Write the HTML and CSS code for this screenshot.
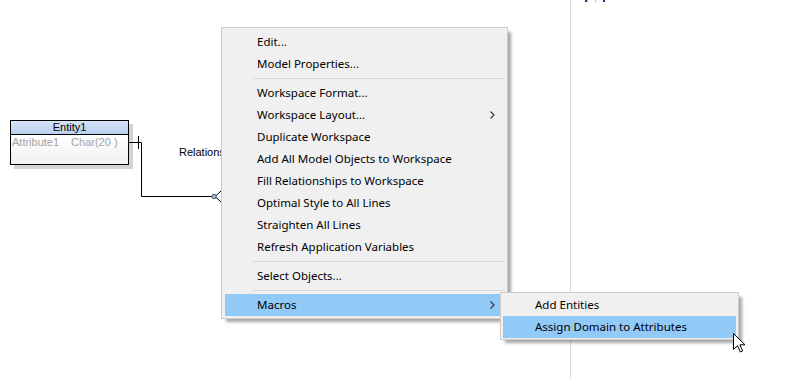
FILE: index.html
```html
<!DOCTYPE html>
<html lang="en">
<head>
    <meta charset="UTF-8">
    <meta name="viewport" content="width=device-width, initial-scale=1.0">
    <title>Model Workspace</title>
    <link rel="stylesheet" href="styles.css">
</head>
<body>
    <div class="workspace">
        <!-- diagram canvas -->
        <div class="diagram">
            <div class="entity">
                <div class="entity-title">Entity1</div>
                <div class="entity-body">
                    <span class="attr-name">Attribute1</span>
                    <span class="attr-type">Char(20 )</span>
                </div>
            </div>

            <svg class="links" width="570" height="378" viewBox="0 0 570 378">
                <path d="M129 142.5 H141.5 V196.5 H213" fill="none" stroke="#000" stroke-width="1"/>
                <path d="M138.5 136 V149" stroke="#000" stroke-width="1"/>
                <path d="M215 196.5 L221 191 M215 196.5 L221 202" stroke="#000" stroke-width="1"/>
                <circle cx="214" cy="196.5" r="2.2" fill="#9cc3e6" stroke="#333" stroke-width="0.8"/>
                <path d="M221.5 176 V212" stroke="#000" stroke-width="1"/>
            </svg>

            <div class="link-label">Relationship</div>
        </div>

        <!-- side pane -->
        <div class="side">
            <svg class="side-icons" width="40" height="4" viewBox="0 0 40 4">
                <rect x="14" y="0" width="2" height="2" fill="#1f3f7a"/>
                <rect x="16" y="0" width="1" height="2" fill="#e0a040"/>
                <rect x="24" y="0" width="1" height="2" fill="#9ac0e0"/>
                <rect x="32" y="0" width="2" height="2" fill="#1f3f7a"/>
            </svg>
        </div>
    </div>

    <!-- context menu -->
    <div class="menu">
        <div class="menu-item">Edit...</div>
        <div class="menu-item">Model Properties...</div>
        <div class="menu-sep"></div>
        <div class="menu-item">Workspace Format...</div>
        <div class="menu-item has-sub">Workspace Layout...
            <svg class="chevron" width="5" height="8" viewBox="0 0 5 8"><path d="M0.5 0.5 L4 4 L0.5 7.5" fill="none" stroke="#333" stroke-width="1.1"/></svg>
        </div>
        <div class="menu-item">Duplicate Workspace</div>
        <div class="menu-item">Add All Model Objects to Workspace</div>
        <div class="menu-item">Fill Relationships to Workspace</div>
        <div class="menu-item">Optimal Style to All Lines</div>
        <div class="menu-item">Straighten All Lines</div>
        <div class="menu-item">Refresh Application Variables</div>
        <div class="menu-sep"></div>
        <div class="menu-item">Select Objects...</div>
        <div class="menu-sep"></div>
        <div class="menu-item has-sub active">Macros
            <svg class="chevron" width="5" height="8" viewBox="0 0 5 8"><path d="M0.5 0.5 L4 4 L0.5 7.5" fill="none" stroke="#333" stroke-width="1.1"/></svg>
        </div>
    </div>

    <!-- macros submenu -->
    <div class="menu submenu">
        <div class="menu-item">Add Entities</div>
        <div class="menu-item active">Assign Domain to Attributes</div>
    </div>

    <!-- mouse pointer -->
    <svg class="pointer" width="13" height="20" viewBox="0 0 13 20">
        <path d="M0.5 0.5 V16.5 L4.5 12.7 L7.3 19 L9.6 18 L6.9 11.8 H12 Z" fill="#fff" stroke="#000" stroke-width="1"/>
    </svg>
</body>
</html>
```

FILE: styles.css
```css
/* page */
body {
    margin: 0;
    background-color: #fff;
    overflow: hidden;
    font-family: "Noto Sans", "Open Sans", sans-serif;
}

.workspace {
    display: flex;
    height: 100vh;
}

/* diagram canvas */
.diagram {
    position: relative;
    width: 570px;
    flex: none;
}

.side {
    flex: 1;
    border-left: 1px solid #dcdcdc;
}

.side-icons {
    display: block;
}

/* entity box */
.entity {
    position: absolute;
    left: 10px;
    top: 120px;
    width: 117px;
    border: 1px solid #000;
    box-shadow: 4px 4px 0 #d4d4d4;
    font-family: "Liberation Sans", Arial, sans-serif;
    font-size: 11px;
}

.entity-title {
    height: 13px;
    line-height: 13px;
    text-align: center;
    background: linear-gradient(#d6e4f6, #b9cfee);
    border-bottom: 1px solid #000;
    color: #000;
}

.entity-body {
    height: 29px;
    display: flex;
    gap: 12px;
    padding-left: 1px;
    line-height: 15px;
    color: #a3a3a3;
    background: linear-gradient(#ffffff, #f1f1f1);
}

.links {
    position: absolute;
    left: 0;
    top: 0;
}

.link-label {
    position: absolute;
    left: 179px;
    top: 146px;
    font-family: "Liberation Sans", Arial, sans-serif;
    font-size: 11px;
    color: #000;
}

/* context menu */
.menu {
    position: absolute;
    left: 221px;
    top: 27px;
    width: 280px;
    padding: 3px 2px 2px 3px;
    background-color: #f0f0f0;
    border: 1px solid #cccccc;
    box-shadow: 4px 4px 3px -1px rgba(0, 0, 0, 0.35);
    font-size: 11.5px;
    color: #000;
}

.menu-item {
    position: relative;
    height: 22px;
    line-height: 22px;
    padding-left: 32px;
    white-space: nowrap;
}

.menu-item.active {
    background-color: #91c9f7;
}

.chevron {
    position: absolute;
    right: 10px;
    top: 7px;
}

.menu-sep {
    height: 7px;
    margin-left: 28px;
    background: linear-gradient(#d7d7d7, #d7d7d7) no-repeat 0 3px / 100% 1px;
}

/* submenu */
.submenu {
    left: 500px;
    top: 292px;
    width: 233px;
    padding: 1px 2px 1px 2px;
}

.pointer {
    position: absolute;
    left: 733px;
    top: 333px;
}
```
